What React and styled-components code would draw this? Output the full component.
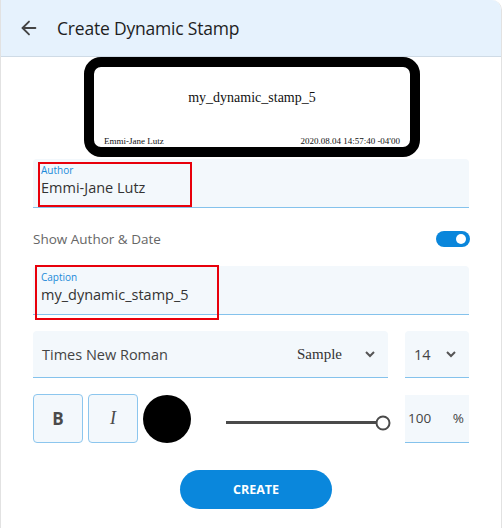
import React, { useState } from 'react';
import styled, { createGlobalStyle } from 'styled-components';
import { ArrowLeft } from 'lucide-react';

const GlobalStyle = createGlobalStyle`
  * { box-sizing: border-box; margin: 0; padding: 0; }
  body { background: #fff; font-family: 'Open Sans', 'Noto Sans', sans-serif; }
`;

export default function App() {
  const [showMeta, setShowMeta] = useState(true);
  const [opacity] = useState(100);

  return (
    <>
      <GlobalStyle />
      <Panel>
        <Header>
          <BackButton aria-label="Back">
            <ArrowLeft size={22} strokeWidth={2} color="#444" />
          </BackButton>
          <Title>Create Dynamic Stamp</Title>
        </Header>

        <Body>
          <PreviewRow>
            <Stamp>
              <StampCaption>my_dynamic_stamp_5</StampCaption>
              <StampFooter>
                <span>Emmi-Jane Lutz</span>
                <span>2020.08.04 14:57:40 -04'00</span>
              </StampFooter>
            </Stamp>
          </PreviewRow>

          <Field $top={2}>
            <FieldLabel>Author</FieldLabel>
            <FieldValue>Emmi-Jane Lutz</FieldValue>
            <Highlight $left={5} $top={3} $width={154} $height={45} />
          </Field>

          <ToggleRow>
            <ToggleLabel>Show Author &amp; Date</ToggleLabel>
            <Switch $on={showMeta} onClick={() => setShowMeta(!showMeta)}>
              <Knob $on={showMeta} />
            </Switch>
          </ToggleRow>

          <Field>
            <FieldLabel>Caption</FieldLabel>
            <FieldValue>my_dynamic_stamp_5</FieldValue>
            <Highlight $left={2} $top={-1} $width={184} $height={55} />
          </Field>

          <Row $gap={17} $top={16}>
            <Select $grow>
              <SelectText>Times New Roman</SelectText>
              <Sample>Sample</Sample>
              <Chevron />
            </Select>
            <Select $width={64}>
              <SelectText>14</SelectText>
              <Chevron />
            </Select>
          </Row>

          <Row $gap={5} $top={16}>
            <StyleButton><BoldGlyph>B</BoldGlyph></StyleButton>
            <StyleButton><ItalicGlyph>I</ItalicGlyph></StyleButton>
            <Swatch />
            <SliderTrack>
              <SliderFill style={{ width: `${opacity}%` }} />
              <SliderThumb style={{ left: `${opacity}%` }} />
            </SliderTrack>
            <OpacityBox>
              <span>{opacity}</span>
              <span>%</span>
            </OpacityBox>
          </Row>

          <Footer>
            <CreateButton>CREATE</CreateButton>
          </Footer>
        </Body>
      </Panel>
    </>
  );
}

function Chevron() {
  return (
    <ChevronSvg width="12" height="8" viewBox="0 0 12 8">
      <polyline points="2,2 6,6 10,2" fill="none" stroke="#555" strokeWidth="2" />
    </ChevronSvg>
  );
}

const Panel = styled.div`
  width: 502px;
  height: 528px;
  background: #fff;
  border-left: 1px solid #e2e2e2;
  border-right: 1px solid #e2e2e2;
  border-top-right-radius: 10px;
  overflow: hidden;
`;

const Header = styled.div`
  height: 57px;
  background: #e6f2fd;
  border-bottom: 1px solid #cfdbe6;
  display: flex;
  align-items: center;
  padding-left: 17px;
`;

const BackButton = styled.button`
  border: none;
  background: none;
  display: flex;
  align-items: center;
  cursor: pointer;
  margin-right: 17px;
`;

const Title = styled.h1`
  font-size: 17.5px;
  font-weight: 400;
  color: #1e1e1e;
  letter-spacing: -0.2px;
`;

const Body = styled.div`
  padding: 0 32px;
  display: flex;
  flex-direction: column;
`;

const PreviewRow = styled.div`
  display: flex;
  justify-content: center;
  padding-left: 2px;
`;

const Stamp = styled.div`
  width: 336px;
  height: 100px;
  border: 10px solid #000;
  border-radius: 17px;
  background: #fff;
  display: flex;
  flex-direction: column;
  font-family: 'Liberation Serif', 'Times New Roman', serif;
  color: #111;
`;

const StampCaption = styled.div`
  flex: 1;
  display: flex;
  align-items: center;
  justify-content: center;
  font-size: 14px;
  padding-bottom: 8px;
`;

const StampFooter = styled.div`
  display: flex;
  justify-content: space-between;
  font-size: 9px;
  line-height: 11px;
  padding: 0 10px 0 10px;
`;

const Field = styled.div`
  position: relative;
  height: 49px;
  margin-top: ${p => p.$top || 0}px;
  background: #f3f8fc;
  border-bottom: 1px solid #84c2ec;
  border-radius: 4px 4px 0 0;
  padding: 4px 8px 0 8px;
`;

const FieldLabel = styled.div`
  font-size: 10px;
  line-height: 14px;
  color: #1a8ad9;
`;

const FieldValue = styled.div`
  font-size: 14.5px;
  line-height: 22px;
  color: #333;
`;

const Highlight = styled.div`
  position: absolute;
  left: ${p => p.$left}px;
  top: ${p => p.$top}px;
  width: ${p => p.$width}px;
  height: ${p => p.$height}px;
  border: 2px solid #e8000b;
  pointer-events: none;
`;

const ToggleRow = styled.div`
  height: 58px;
  display: flex;
  align-items: center;
  justify-content: space-between;
  padding-top: 4px;
`;

const ToggleLabel = styled.span`
  font-size: 13.5px;
  color: #666;
`;

const Switch = styled.button`
  width: 34px;
  height: 16px;
  border: none;
  border-radius: 8px;
  background: ${p => (p.$on ? '#0a86db' : '#bbb')};
  position: relative;
  cursor: pointer;
  margin-right: -1px;
`;

const Knob = styled.span`
  position: absolute;
  top: 3px;
  left: ${p => (p.$on ? '20px' : '3px')};
  width: 10px;
  height: 10px;
  border-radius: 50%;
  background: #fff;
`;

const Row = styled.div`
  display: flex;
  align-items: center;
  gap: ${p => p.$gap}px;
  margin-top: ${p => p.$top}px;
`;

const Select = styled.div`
  ${p => (p.$grow ? 'flex: 1;' : `width: ${p.$width}px;`)}
  height: 47px;
  background: #f3f8fc;
  border-bottom: 1px solid #84c2ec;
  border-radius: 4px 4px 0 0;
  display: flex;
  align-items: center;
  padding: 0 12px 0 9px;
`;

const SelectText = styled.span`
  flex: 1;
  font-size: 14.5px;
  color: #444;
`;

const Sample = styled.span`
  font-family: 'Liberation Serif', 'Times New Roman', serif;
  font-size: 15px;
  color: #333;
  margin-right: 22px;
`;

const ChevronSvg = styled.svg`
  flex-shrink: 0;
`;

const StyleButton = styled.button`
  width: 50px;
  height: 49px;
  background: #f3f8fc;
  border: 1px solid #8cc6ee;
  border-radius: 4px;
  display: flex;
  align-items: center;
  justify-content: center;
  cursor: pointer;
`;

const BoldGlyph = styled.span`
  font-family: 'Open Sans', sans-serif;
  font-weight: 700;
  font-size: 17px;
  color: #4a4a4a;
`;

const ItalicGlyph = styled.span`
  font-family: 'Liberation Serif', serif;
  font-style: italic;
  font-size: 18px;
  color: #4a4a4a;
`;

const Swatch = styled.div`
  width: 48px;
  height: 48px;
  border-radius: 50%;
  background: #000;
`;

const SliderTrack = styled.div`
  position: relative;
  flex: 1;
  height: 3px;
  margin: 8px 17px 0 30px;
  background: #ccc;
`;

const SliderFill = styled.div`
  height: 100%;
  background: #4a4a4a;
`;

const SliderThumb = styled.div`
  position: absolute;
  top: 50%;
  width: 15px;
  height: 15px;
  border-radius: 50%;
  background: #fff;
  border: 2px solid #4a4a4a;
  transform: translate(-50%, -50%);
`;

const OpacityBox = styled.div`
  width: 64px;
  height: 48px;
  background: #f3f8fc;
  border-bottom: 1px solid #84c2ec;
  display: flex;
  align-items: center;
  justify-content: space-between;
  padding: 0 5px 0 3px;
  font-size: 13.5px;
  color: #444;
`;

const Footer = styled.div`
  display: flex;
  justify-content: center;
  margin-top: 27px;
  padding-left: 10px;
`;

const CreateButton = styled.button`
  width: 152px;
  height: 39px;
  border: none;
  border-radius: 20px;
  background: #0a87dc;
  color: #fff;
  font-family: 'Open Sans', sans-serif;
  font-weight: 700;
  font-size: 12.5px;
  cursor: pointer;
`;
